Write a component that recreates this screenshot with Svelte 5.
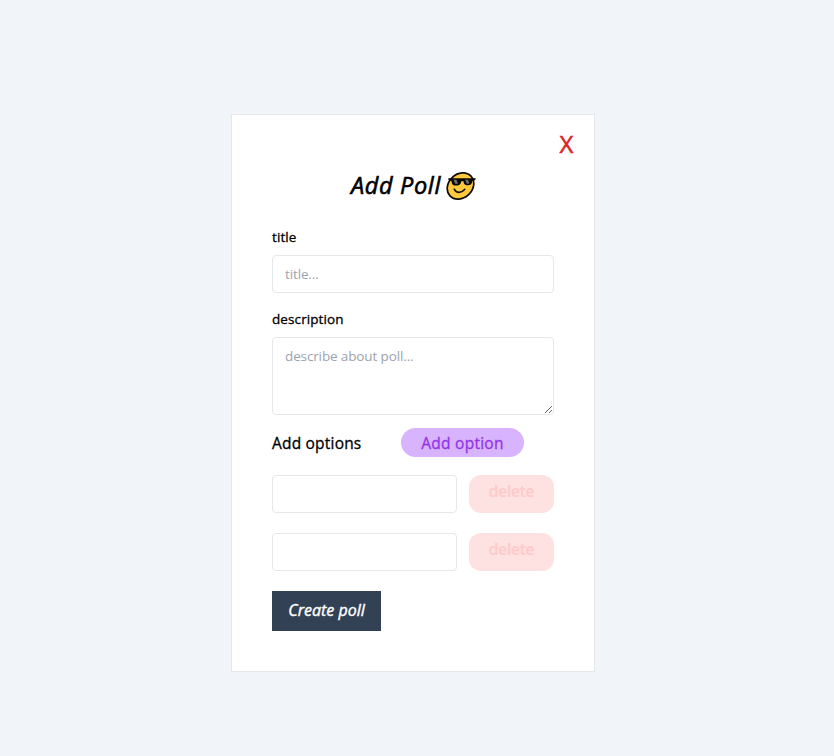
<script>
  let title = $state('');
  let description = $state('');
  let options = $state([
    { id: 1, text: '' },
    { id: 2, text: '' }
  ]);
  let nextId = 3;

  function addOption() {
    options.push({ id: nextId++, text: '' });
  }

  function removeOption(id) {
    options = options.filter((o) => o.id !== id);
  }
</script>

<main class="page">
  <form class="card" onsubmit={(e) => e.preventDefault()}>
    <button type="button" class="close" aria-label="close">X</button>

    <h1 class="heading">
      <span>Add Poll</span>
      <svg class="emoji" width="31" height="28" viewBox="0 0 31 28" aria-hidden="true">
        <ellipse cx="14.5" cy="14" rx="14.4" ry="11.9" transform="rotate(-43 14.5 14)" fill="#ffc83d" stroke="#0b0b0b" stroke-width="1.7" />
        <path d="M2.2 6.2H29.8L29.1 8.2L26.3 8.9C25.8 12 25 13.2 22.3 13.2H20.5C18.5 13.2 17.6 11.6 17.5 9.3H15.4C14.7 12.3 13.5 13.5 11 13.5H9C6.5 13.5 5.6 11.8 5.5 9L2.6 8.3Z" fill="#080808" />
        <path d="M7.5 7.8L10.4 7.8L12 11.8L9.2 11.8ZM19.2 7.8L22 7.8L23.4 11.5L20.8 11.8Z" fill="#707070" />
        <path d="M8.2 17.2C10.3 21.6 15.7 21.2 18.8 17.3" fill="none" stroke="#111" stroke-width="1.6" stroke-linecap="round" />
      </svg>
    </h1>

    <label class="label" for="title">title</label>
    <input id="title" class="field" type="text" placeholder="title..." bind:value={title} />

    <label class="label second" for="description">description</label>
    <textarea id="description" class="field area" placeholder="describe about poll..." bind:value={description}></textarea>

    <div class="options-head">
      <span class="options-title">Add options</span>
      <button type="button" class="add" onclick={addOption}>Add option</button>
    </div>

    <div class="options">
      {#each options as option (option.id)}
        <div class="row">
          <input class="field option" type="text" bind:value={option.text} aria-label="option" />
          <button type="button" class="delete" disabled={options.length <= 2} onclick={() => removeOption(option.id)}>delete</button>
        </div>
      {/each}
    </div>

    <button type="submit" class="create">Create poll</button>
  </form>
</main>

<style>
  :global(body) {
    margin: 0;
  }
  .page,
  .page * {
    box-sizing: border-box;
  }
  .page {
    height: 756px;
    padding: 114px 0 0 231px;
    background: #f1f5f9;
    color: #000;
    font-family: 'Open Sans', 'Noto Sans', sans-serif;
  }
  .card {
    position: relative;
    display: flex;
    flex-direction: column;
    width: 364px;
    height: 558px;
    padding: 50px 40px 40px;
    border: 1px solid #e5e7eb;
    background: #fff;
  }
  button {
    padding: 0;
    border: 0;
    font-family: inherit;
    cursor: pointer;
    white-space: nowrap;
  }
  .close {
    position: absolute;
    top: 13px;
    right: 20px;
    width: 15px;
    background: none;
    color: #dc2626;
    font-size: 24px;
    line-height: 32px;
    -webkit-text-stroke: 0.5px #dc2626;
  }
  .heading {
    display: flex;
    align-items: center;
    gap: 4px;
    height: 40px;
    margin: 0 0 22px 79px;
    font-size: 23.5px;
    font-weight: 400;
    font-style: italic;
    line-height: 40px;
    letter-spacing: 0.65px;
    white-space: nowrap;
    -webkit-text-stroke: 0.6px #000;
  }
  .heading span {
    width: 91px;
  }
  .emoji {
    flex: none;
    margin-top: 2px;
  }
  .label {
    height: 24px;
    margin-bottom: 4px;
    font-size: 13.5px;
    line-height: 20px;
    letter-spacing: 0.1px;
    -webkit-text-stroke: 0.3px #000;
  }
  .label.second {
    margin-top: 16px;
  }
  .field {
    display: block;
    width: 100%;
    height: 38px;
    flex: none;
    margin: 0;
    padding: 8px 12px;
    border: 1px solid #e5e7eb;
    border-radius: 4px;
    background: #fff;
    color: #111827;
    outline: none;
    font-family: inherit;
    font-size: 13.5px;
    line-height: 20px;
    letter-spacing: -0.13px;
  }
  .field::placeholder {
    color: #9ca3af;
  }
  .area {
    height: 78px;
    resize: vertical;
  }
  .options-head {
    display: flex;
    align-items: center;
    height: 29px;
    margin: 13px 0 18px;
    font-size: 15.5px;
    letter-spacing: 0.2px;
  }
  .options-title {
    width: 129px;
    -webkit-text-stroke: 0.3px #000;
  }
  .add {
    width: 123px;
    height: 29px;
    border-radius: 15px;
    background: #d8b4fe;
    color: #9333ea;
    font-size: 15.5px;
    letter-spacing: 0.25px;
    -webkit-text-stroke: 0.3px #9333ea;
  }
  .options {
    display: flex;
    flex-direction: column;
    gap: 20px;
  }
  .row {
    display: flex;
    gap: 12px;
  }
  .option {
    width: 185px;
  }
  .delete {
    width: 85px;
    height: 38px;
    padding-bottom: 6px;
    border-radius: 12px;
    background: #fee2e2;
    color: #fecaca;
    font-size: 15.5px;
    font-weight: 600;
    letter-spacing: -0.25px;
    -webkit-text-stroke: 0.2px #fecaca;
  }
  .create {
    width: 109px;
    height: 40px;
    margin-top: 20px;
    padding-bottom: 2px;
    background: #334155;
    color: #fff;
    font-size: 16px;
    font-style: italic;
    -webkit-text-stroke: 0.4px #fff;
  }
</style>
